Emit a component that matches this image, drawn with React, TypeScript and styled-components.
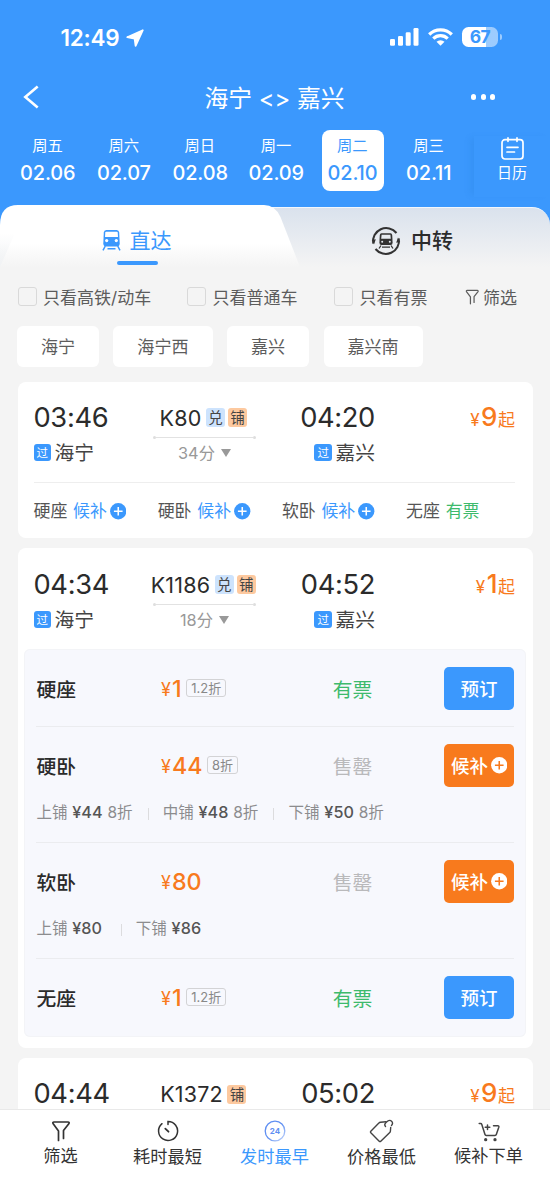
import React from 'react';
import styled, { createGlobalStyle, css } from 'styled-components';

const BLUE = '#3b98fd';
const ORANGE = '#f87a1d';
const GREEN = '#3dba6c';

const GlobalStyle = createGlobalStyle`
  * { box-sizing: border-box; }
  body {
    margin: 0;
    background: #f4f4f4;
    font-family: Inter, "Noto Sans CJK SC", sans-serif;
    color: #2b2b2b;
  }
`;

const Screen = styled.div`
  width: 550px;
  height: 1192px;
  display: flex;
  flex-direction: column;
  overflow: hidden;
  background: #f4f4f4;
`;

const Header = styled.header`
  flex: none;
  height: 267px;
  background: ${BLUE};
  color: #fff;
  display: flex;
  flex-direction: column;
`;

const StatusBar = styled.div`
  height: 64px;
  padding: 10px 48px 0 60.5px;
  display: flex;
  align-items: center;
  justify-content: space-between;
`;

const Clock = styled.div`
  display: flex;
  align-items: center;
  gap: 7px;
  font-size: 22.5px;
  font-weight: 600;
  line-height: 28px;
  letter-spacing: -0.25px;
  padding-top: 1px;
`;

const StatusIcons = styled.div`
  display: flex;
  align-items: center;
  gap: 9px;
`;

const Battery = styled.div`
  display: flex;
  align-items: center;
  gap: 2px;
  &::after {
    content: '';
    width: 2px;
    height: 6px;
    border-radius: 0 2px 2px 0;
    background: rgba(255, 255, 255, 0.5);
  }
`;

const BatteryLevel = styled.div`
  width: 36px;
  height: 20px;
  border-radius: 6.5px;
  background: linear-gradient(90deg, #fff 68%, rgba(255, 255, 255, 0.5) 68%);
  color: ${BLUE};
  font-size: 17.5px;
  font-weight: 700;
  line-height: 20px;
  letter-spacing: -0.6px;
  text-align: center;
`;

const NavBar = styled.nav`
  height: 66px;
  padding: 0 51px 0 22px;
  display: grid;
  grid-template-columns: 60px 1fr 28px;
  align-items: center;
`;

const NavTitle = styled.h1`
  margin: 0;
  padding: 3px 4px 0 0;
  font-size: 23.8px;
  font-weight: 400;
  line-height: 30px;
  text-align: center;
  white-space: pre;
`;

const Dots = styled.div`
  display: flex;
  gap: 4.4px;
  & > i {
    width: 5.2px;
    height: 5.2px;
    border-radius: 50%;
    background: #fff;
  }
`;

const DateStrip = styled.div`
  height: 75px;
  display: flex;
  padding-left: 10px;
`;

const DateCell = styled.div<{ $active?: boolean }>`
  flex: none;
  width: 62px;
  height: 61px;
  margin-right: 14.2px;
  border-radius: 8px;
  display: flex;
  flex-direction: column;
  align-items: center;
  ${(p) => p.$active && css`background: #fff; color: ${BLUE};`}
  &:first-child { margin-left: 7px; }
`;

const Weekday = styled.span`
  margin: 5px 1px 0 0;
  font-size: 15.3px;
  line-height: 22px;
`;

const DayNumber = styled.span`
  margin: 4px 0.5px 0 0;
  font-size: 19.9px;
  font-weight: 450;
  line-height: 24px;
  letter-spacing: -0.1px;
`;

const CalendarButton = styled.div`
  flex: 1;
  height: 61px;
  margin-top: 6px;
  padding-top: 1px;
  display: flex;
  flex-direction: column;
  align-items: center;
  box-shadow: -6px 0 6px -2px rgba(30, 110, 200, 0.14);
  font-size: 15px;
  line-height: 22px;
  svg { margin-bottom: 1.5px; }
`;

const TabStrip = styled.div`
  height: 62px;
  display: flex;
  align-items: flex-start;
`;

const TrainIconBox = styled.span`
  display: flex;
  height: 30px;
  align-items: center;
`;

const Tab = styled.div<{ $active?: boolean }>`
  display: flex;
  justify-content: center;
  font-size: 21px;
  line-height: 30px;
  ${(p) =>
    p.$active
      ? css`
          position: relative;
          z-index: 1;
          width: 300px;
          height: 62px;
          padding: 21px 27px 0 0;
          gap: 9px;
          color: ${BLUE};
          background: linear-gradient(#fff 62%, #f4f4f4);
          clip-path: path('M0 62 V20 Q0 0 18 0 H264 Q275 0 280.5 12 L300 62 Z');
          &::before {
            content: '';
            position: absolute;
            left: 0;
            bottom: 0;
            width: 15px;
            height: 34px;
            clip-path: polygon(0 0, 100% 0, 0 100%);
            background: linear-gradient(rgba(238, 241, 245, 0), #f1f3f5);
          }
          &::after {
            content: '';
            position: absolute;
            left: 117px;
            top: 55.5px;
            width: 41px;
            height: 4px;
            border-radius: 2px;
            background: ${BLUE};
          }
          ${TrainIconBox} { margin-top: -1px; }
        `
      : css`
          flex: 1;
          height: 60px;
          margin: 2px 0 0 -50px;
          padding: 18px 0 0 24px;
          gap: 10px;
          color: #2b2b2b;
          font-weight: 500;
          border-top: 1.5px solid #f2f7fd;
          border-radius: 0 18px 0 0;
          background: linear-gradient(#dae2ed, #f4f4f4);
        `}
`;

const FilterBar = styled.div`
  flex: none;
  height: 58.5px;
  padding: 1px 0 0 17.5px;
  display: grid;
  grid-template-columns: 169.5px 147px 131px auto;
  align-items: center;
  color: #5c5c5c;
  font-size: 17px;
  line-height: 24px;
`;

const FilterOption = styled.label`
  display: flex;
  align-items: center;
  white-space: nowrap;
  span { padding-top: 2px; }
`;

const CheckBox = styled.i`
  width: 19px;
  height: 19px;
  margin-right: 6.5px;
  border: 1.5px solid #d9d9d9;
  border-radius: 3px;
`;

const FilterLink = styled(FilterOption)`
  gap: 3.5px;
`;

const ChipRow = styled.div`
  flex: none;
  display: flex;
  gap: 14.5px;
  padding-left: 17px;
`;

const Chip = styled.div`
  height: 41.5px;
  padding: 0 23.9px;
  border-radius: 6px;
  background: #fff;
  color: #5c5c5c;
  font-size: 17.1px;
  line-height: 42px;
`;

const TrainList = styled.main`
  flex: 1;
  min-height: 0;
  overflow: hidden;
  display: flex;
  flex-direction: column;
  gap: 10.2px;
  padding: 14.5px 17.5px 0;
`;

const Card = styled.section`
  flex: none;
  border-radius: 8px;
  background: #fff;
`;

const ExpandedCard = styled(Card)`
  padding-bottom: 10.3px;
`;

const TrainHeader = styled.div`
  height: 100.5px;
  padding: 19.4px 17.5px 0 16px;
  display: grid;
  grid-template-columns: 104.5px 133px 104px 1fr;
  align-items: start;
`;

const Stop = styled.div<{ $end?: boolean }>`
  display: flex;
  flex-direction: column;
  align-items: ${(p) => (p.$end ? 'flex-end' : 'flex-start')};
`;

const StopTime = styled.div`
  font-size: 27.3px;
  line-height: 34px;
  letter-spacing: -0.35px;
  white-space: nowrap;
`;

const StationName = styled.div`
  display: flex;
  align-items: center;
  gap: 3.5px;
  color: #444;
  font-size: 19.8px;
  line-height: 34px;
  margin-top: 1px;
`;

const PassTag = styled.span`
  width: 17.5px;
  height: 17.5px;
  margin-top: -1px;
  border-radius: 3px;
  background: ${BLUE};
  color: #fff;
  font-size: 11.5px;
  line-height: 18.5px;
  text-align: center;
`;

const TrainInfo = styled.div`
  display: flex;
  flex-direction: column;
  align-items: center;
`;

const TrainCode = styled.div`
  height: 34px;
  margin-left: -2.5px;
  display: flex;
  align-items: center;
  gap: 3px;
  font-size: 21.5px;
  b { font-weight: 400; margin-right: 1.5px; font-kerning: none; letter-spacing: 0.2px; }
`;

const TrainTag = styled.span<{ $warm?: boolean }>`
  width: 19px;
  height: 19px;
  border-radius: 3px;
  background: ${(p) => (p.$warm ? '#fdc99f' : '#cde3fd')};
  color: #444;
  font-size: 14.5px;
  line-height: 20px;
  text-align: center;
`;

const RouteLine = styled.div`
  width: 103px;
  height: 3px;
  margin-top: 1px;
  display: flex;
  align-items: center;
  &::before, &::after {
    content: '';
    width: 3px;
    height: 3px;
    border-radius: 50%;
    background: #dedede;
  }
  i { flex: 1; height: 1px; background: #e2e2e2; }
`;

const Duration = styled.div`
  display: flex;
  align-items: center;
  gap: 6px;
  margin-top: 2.5px;
  color: #999;
  font-size: 16.3px;
  line-height: 24px;
  &::after {
    content: '';
    border: 5.5px solid transparent;
    border-top: 8px solid #999;
    border-bottom: 0;
  }
`;

const FromPrice = styled.div`
  padding-top: 0.8px;
  color: ${ORANGE};
  font-size: 17px;
  line-height: 34px;
  text-align: right;
  white-space: nowrap;
  b { margin: 0 0.5px 0 1.5px; font-size: 26px; font-weight: 500; line-height: 30px; }
`;

const SeatSummary = styled.div`
  height: 56.2px;
  margin: 0 17.5px 0 16px;
  border-top: 1px solid #eee;
  display: grid;
  grid-template-columns: repeat(4, 124.2px);
  align-items: center;
  color: #555;
  font-size: 16.9px;
  line-height: 24px;
`;

const SeatItem = styled.div`
  display: flex;
  align-items: center;
  padding-top: 1.5px;
  white-space: nowrap;
`;

const SeatState = styled.span<{ $color: string }>`
  margin: 0 3px 0 5.8px;
  color: ${(p) => p.$color};
`;

const SeatPanel = styled.div`
  margin: 0 6.5px;
  padding: 0 12px;
  border-radius: 6px;
  background: #f7f8fd;
  box-shadow: inset 0 0 0 1px #f3f4f7;
`;

const SeatRow = styled.div`
  padding: 18px 0 15.8px;
  & + & { padding-top: 17px; border-top: 1px solid #ebecef; }
  &:last-child { padding-bottom: 18px; }
`;

const SeatMain = styled.div`
  height: 43.3px;
  display: grid;
  grid-template-columns: 125px 171.7px 1fr 70px;
  align-items: center;
  font-size: 19.8px;
  line-height: 30px;
`;

const SeatName = styled.span`
  padding: 3px 0 0 0.5px;
  font-weight: 500;
`;

const SeatPrice = styled.div`
  display: flex;
  align-items: center;
  color: ${ORANGE};
  font-size: 18px;
  b { margin-left: 1.2px; font-size: 23.3px; font-weight: 500; letter-spacing: -0.2px; }
  i { font-style: normal; padding-top: 2px; }
`;

const Discount = styled.span`
  height: 18.5px;
  margin: -1px 0 0 4.3px;
  padding: 0 4.3px;
  border: 1px solid #d3d3d5;
  border-radius: 3px;
  color: #888;
  font-size: 13px;
  line-height: 17px;
`;

const Availability = styled.span<{ $open?: boolean }>`
  padding-top: 3px;
  color: ${(p) => (p.$open ? GREEN : '#b9b9bb')};
`;

const ActionButton = styled.div<{ $waitlist?: boolean }>`
  height: 43.3px;
  border-radius: 5px;
  background: ${(p) => (p.$waitlist ? ORANGE : BLUE)};
  color: #fff;
  display: flex;
  align-items: center;
  justify-content: center;
  gap: 2.5px;
  font-size: 18.5px;
  line-height: 40px;
  font-weight: 500;
  span { padding-top: 1px; }
`;

const BerthRow = styled.div`
  display: flex;
  align-items: center;
  height: 24px;
  margin: 13px 0 1.9px;
  padding-left: 0.5px;
`;

const Berth = styled.div`
  display: flex;
  align-items: center;
  gap: 4.7px;
  color: #8c8c8e;
  font-size: 15.5px;
  line-height: 24px;
  span { padding-top: 1px; }
  b { color: #555; font-weight: 500; font-size: 16.2px; letter-spacing: 0.1px; }
  b:last-child { margin-right: 3.5px; }
  & + &::before {
    content: '';
    width: 1px;
    height: 12px;
    margin: 3px 9.5px 0 15px;
    background: #dcdcde;
  }
`;

const TabBar = styled.footer`
  flex: none;
  height: 83px;
  padding: 0 8px 0 7px;
  border-top: 1.5px solid #e9e9e9;
  background: #fff;
  display: grid;
  grid-template-columns: repeat(5, 107px);
`;

const TabBarItem = styled.div<{ $active?: boolean; $tight?: boolean }>`
  display: flex;
  flex-direction: column;
  align-items: center;
  padding-top: 9px;
  gap: ${(p) => (p.$tight ? '0.5px' : '1.5px')};
  color: ${(p) => (p.$active ? BLUE : '#333')};
  font-size: 17.2px;
  line-height: 24px;
`;

const TabBarIcon = styled.span`
  height: 24px;
  display: flex;
  align-items: center;
`;

const PlusIcon = ({ fill, mark, size = 16.5 }: { fill: string; mark: string; size?: number }) => (
  <svg width={size} height={size} viewBox="0 0 16 16">
    <circle cx="8" cy="8" r="7.9" fill={fill} />
    <path d="M8 3.8V12.2M3.8 8H12.2" stroke={mark} strokeWidth="1.5" />
  </svg>
);

const FunnelIcon = ({ size }: { size: number }) => (
  <svg width={size} height={size * 1.1} viewBox="0 0 20 22" fill="none" stroke="currentColor" strokeWidth="1.7" strokeLinejoin="round" strokeLinecap="round">
    <path d="M7.5 20.5V11L2 3.5Q1.4 2 3 2H17Q18.6 2 18 3.5L12.5 10.5V18.5" />
  </svg>
);

const TrainIcon = () => (
  <svg width="19" height="22" viewBox="0 0 19 22">
    <path fill="currentColor" d="M4.3 1H14.7Q17 1 17.2 3.5L17.7 14.5Q17.7 17.5 14.7 17.5H4.3Q1.3 17.5 1.3 14.5L1.8 3.5Q2 1 4.3 1Z" />
    <path fill="#fff" d="M4.2 2.7H14.8Q15.6 2.7 15.7 3.6L16 7.9H3L3.3 3.6Q3.4 2.7 4.2 2.7Z" />
    <circle cx="4.7" cy="11.6" r="1.6" fill="#fff" />
    <circle cx="14.3" cy="11.6" r="1.6" fill="#fff" />
    <path d="M3.3 17L1 21.3M15.7 17L18 21.3M5.5 19.8H13.5" stroke="currentColor" strokeWidth="1.5" fill="none" />
  </svg>
);

const TransferIcon = () => (
  <svg width="30" height="30" viewBox="0 0 30 30" fill="none" stroke="#333" strokeWidth="2">
    <path d="M2.2 17.5A13.2 13.2 0 0 1 25.5 7" />
    <path d="M27.8 12.5A13.2 13.2 0 0 1 4.5 23" />
    <path d="M0.8 14L4.8 13.2L3 18.5ZM29.2 16L25.2 16.8L27 11.5Z" fill="#333" stroke="none" />
    <path stroke="none" fill="#333" d="M10.5 7.2H19.5Q21 7.2 21.2 9L21.6 16.5Q21.6 19 19.6 19H10.4Q8.4 19 8.4 16.5L8.8 9Q9 7.2 10.5 7.2Z" />
    <path stroke="none" fill="#e6ebf1" d="M10.6 8.8H19.4L19.8 12.8H10.2Z" />
    <circle cx="11.2" cy="15.7" r="1" fill="#e6ebf1" stroke="none" />
    <circle cx="18.8" cy="15.7" r="1" fill="#e6ebf1" stroke="none" />
    <path d="M10 19.5L8 22.5M20 19.5L22 22.5M11 21.2H19" strokeWidth="1.3" />
  </svg>
);

const CalendarIcon = () => (
  <svg width="23" height="23" viewBox="0 0 23 23" fill="none" stroke="#fff" strokeWidth="1.7" strokeLinecap="round">
    <rect x="1" y="2.7" width="21" height="19.3" rx="3" />
    <path d="M7 0.9V4.3M16 0.9V4.3M6 10.3H17M6 15H13.5" />
  </svg>
);

const SignalIcon = () => (
  <svg width="29" height="18" viewBox="0 0 29 18" fill="#fff">
    <rect x="0" y="11" width="5" height="6.7" rx="1.3" />
    <rect x="8" y="8" width="5" height="9.7" rx="1.3" />
    <rect x="15.7" y="4.3" width="5" height="13.4" rx="1.3" />
    <rect x="23.5" y="0" width="5" height="17.7" rx="1.3" />
  </svg>
);

const WifiIcon = () => (
  <svg width="25" height="18" viewBox="0 0 25 18" fill="none" stroke="#fff" strokeWidth="3.2">
    <path d="M1.2 6.5A16 16 0 0 1 23.8 6.5" />
    <path d="M5.3 10.7A10.2 10.2 0 0 1 19.7 10.7" />
    <path d="M12.5 17.8L8.5 13.8A5.8 5.8 0 0 1 16.5 13.8Z" fill="#fff" stroke="none" />
  </svg>
);

const LocationIcon = () => (
  <svg width="18" height="18" viewBox="0 0 18 18">
    <path d="M16.8 1.2L1.2 8.2L8.6 9.6L9.6 16.8Z" fill="#fff" stroke="#fff" strokeWidth="1.8" strokeLinejoin="round" />
  </svg>
);

const BackIcon = () => (
  <svg width="18" height="24" viewBox="0 0 18 24" fill="none" stroke="#fff" strokeWidth="2.6">
    <path d="M15.7 1.5L3.3 12L15.7 22.5" />
  </svg>
);

const TimerIcon = () => (
  <svg width="22" height="22" viewBox="0 0 22 22" fill="none" stroke="#333" strokeWidth="1.5" strokeLinecap="round">
    <path d="M11 4.5V1.5A9.5 9.5 0 1 1 5 3.7" />
    <path d="M8.3 8.6L11.5 11.7" strokeWidth="1.8" />
  </svg>
);

const DayClockIcon = () => (
  <svg width="22" height="22" viewBox="0 0 22 22">
    <defs>
      <linearGradient id="ring" x1="0" y1="0" x2="1" y2="1">
        <stop offset="0.5" stopColor="#5f8ff2" />
        <stop offset="1" stopColor="#c6d7fb" />
      </linearGradient>
    </defs>
    <circle cx="11" cy="11" r="9.8" fill="none" stroke="url(#ring)" strokeWidth="1.3" />
    <text x="11" y="13.9" textAnchor="middle" fontFamily="Inter, sans-serif" fontSize="8" fontWeight="700" fill="#5f8ff2">24</text>
  </svg>
);

const PriceTagIcon = () => (
  <svg width="25" height="24" viewBox="0 0 25 24" fill="none" stroke="#444" strokeWidth="1.4" strokeLinejoin="round" strokeLinecap="round">
    <path d="M17 2.7L11.5 3.2Q10.5 3.3 9.9 4L1.8 12.2Q1 13 1.8 13.8L10.2 22.2Q11 23 11.8 22.2L20.5 13.8Q21.3 13.1 21.4 12.1L21.7 8.5" />
    <path d="M16.5 7.5Q14.8 5.6 17 3.5L18.8 2Q21 0.6 22.8 2.4Q24.4 4.5 22.5 6.5" />
  </svg>
);

const CartIcon = () => (
  <svg width="22" height="22" viewBox="0 0 22 22" fill="none" stroke="#444" strokeWidth="1.5" strokeLinecap="round" strokeLinejoin="round">
    <path d="M1.2 3.5H2.6Q3.5 3.5 3.8 4.4L7 14.5Q7.3 15.4 8.2 15.4H17Q18 15.4 18.3 14.5L20.8 7.2Q21.2 5.8 19.8 5.8H15.5" />
    <path d="M9.5 5V9.5M7.2 7.2H11.8" />
    <circle cx="7.7" cy="19.7" r="0.9" fill="#444" />
    <circle cx="17" cy="19.7" r="0.9" fill="#444" />
  </svg>
);

const DATES = [
  ['周五', '02.06'],
  ['周六', '02.07'],
  ['周日', '02.08'],
  ['周一', '02.09'],
  ['周二', '02.10'],
  ['周三', '02.11'],
];

interface TrainProps {
  depart: string;
  arrive: string;
  code: string;
  minutes?: string;
  from?: string;
  to?: string;
  price: string;
  exchange?: boolean;
}

const TrainHead = ({ depart, arrive, code, minutes, from, to, price, exchange }: TrainProps) => (
  <TrainHeader>
    <Stop>
      <StopTime>{depart}</StopTime>
      {from && <StationName><PassTag>过</PassTag>{from}</StationName>}
    </Stop>
    <TrainInfo>
      <TrainCode>
        <b>{code}</b>
        {exchange && <TrainTag>兑</TrainTag>}
        <TrainTag $warm>铺</TrainTag>
      </TrainCode>
      {minutes && (
        <>
          <RouteLine><i /></RouteLine>
          <Duration>{minutes}分</Duration>
        </>
      )}
    </TrainInfo>
    <Stop $end>
      <StopTime>{arrive}</StopTime>
      {to && <StationName><PassTag>过</PassTag>{to}</StationName>}
    </Stop>
    <FromPrice>¥<b>{price}</b>起</FromPrice>
  </TrainHeader>
);

interface SeatProps {
  name: string;
  price: string;
  discount?: string;
  open?: boolean;
  berths?: { name: string; price: string; discount?: string }[];
}

const SEATS: SeatProps[] = [
  { name: '硬座', price: '1', discount: '1.2折', open: true },
  {
    name: '硬卧',
    price: '44',
    discount: '8折',
    berths: [
      { name: '上铺', price: '44', discount: '8折' },
      { name: '中铺', price: '48', discount: '8折' },
      { name: '下铺', price: '50', discount: '8折' },
    ],
  },
  {
    name: '软卧',
    price: '80',
    berths: [
      { name: '上铺', price: '80' },
      { name: '下铺', price: '86' },
    ],
  },
  { name: '无座', price: '1', discount: '1.2折', open: true },
];

const Seat = ({ name, price, discount, open, berths }: SeatProps) => (
  <SeatRow>
    <SeatMain>
      <SeatName>{name}</SeatName>
      <SeatPrice>
        <i>¥</i><b>{price}</b>
        {discount && <Discount>{discount}</Discount>}
      </SeatPrice>
      <Availability $open={open}>{open ? '有票' : '售罄'}</Availability>
      {open ? (
        <ActionButton><span>预订</span></ActionButton>
      ) : (
        <ActionButton $waitlist><span>候补</span><PlusIcon fill="#fff" mark={ORANGE} /></ActionButton>
      )}
    </SeatMain>
    {berths && (
      <BerthRow>
        {berths.map((b) => (
          <Berth key={b.name}>
            <span>{b.name}</span>
            <b>¥{b.price}</b>
            {b.discount && <span>{b.discount}</span>}
          </Berth>
        ))}
      </BerthRow>
    )}
  </SeatRow>
);

export default function App() {
  return (
    <Screen>
      <GlobalStyle />
      <Header>
        <StatusBar>
          <Clock>12:49<LocationIcon /></Clock>
          <StatusIcons>
            <SignalIcon />
            <WifiIcon />
            <Battery><BatteryLevel>67</BatteryLevel></Battery>
          </StatusIcons>
        </StatusBar>
        <NavBar>
          <BackIcon />
          <NavTitle>{'海宁 <> 嘉兴'}</NavTitle>
          <Dots><i /><i /><i /></Dots>
        </NavBar>
        <DateStrip>
          {DATES.map(([week, day]) => (
            <DateCell key={day} $active={day === '02.10'}>
              <Weekday>{week}</Weekday>
              <DayNumber>{day}</DayNumber>
            </DateCell>
          ))}
          <CalendarButton><CalendarIcon />日历</CalendarButton>
        </DateStrip>
        <TabStrip>
          <Tab $active><TrainIconBox><TrainIcon /></TrainIconBox>直达</Tab>
          <Tab><TransferIcon />中转</Tab>
        </TabStrip>
      </Header>
      <FilterBar>
        <FilterOption><CheckBox /><span>只看高铁/动车</span></FilterOption>
        <FilterOption><CheckBox /><span>只看普通车</span></FilterOption>
        <FilterOption><CheckBox /><span>只看有票</span></FilterOption>
        <FilterLink><FunnelIcon size={14.5} /><span>筛选</span></FilterLink>
      </FilterBar>
      <ChipRow>
        {['海宁', '海宁西', '嘉兴', '嘉兴南'].map((s) => <Chip key={s}>{s}</Chip>)}
      </ChipRow>
      <TrainList>
        <Card>
          <TrainHead depart="03:46" arrive="04:20" code="K80" minutes="34" from="海宁" to="嘉兴" price="9" exchange />
          <SeatSummary>
            {['硬座', '硬卧', '软卧'].map((s) => (
              <SeatItem key={s}>
                {s}<SeatState $color={BLUE}>候补</SeatState><PlusIcon fill={BLUE} mark="#fff" />
              </SeatItem>
            ))}
            <SeatItem>无座<SeatState $color={GREEN}>有票</SeatState></SeatItem>
          </SeatSummary>
        </Card>
        <ExpandedCard>
          <TrainHead depart="04:34" arrive="04:52" code="K1186" minutes="18" from="海宁" to="嘉兴" price="1" exchange />
          <SeatPanel>
            {SEATS.map((s) => <Seat key={s.name} {...s} />)}
          </SeatPanel>
        </ExpandedCard>
        <Card>
          <TrainHead depart="04:44" arrive="05:02" code="K1372" price="9" />
        </Card>
      </TrainList>
      <TabBar>
        <TabBarItem $tight><TabBarIcon><FunnelIcon size={20} /></TabBarIcon>筛选</TabBarItem>
        <TabBarItem><TabBarIcon><TimerIcon /></TabBarIcon>耗时最短</TabBarItem>
        <TabBarItem $active><TabBarIcon><DayClockIcon /></TabBarIcon>发时最早</TabBarItem>
        <TabBarItem><TabBarIcon><PriceTagIcon /></TabBarIcon>价格最低</TabBarItem>
        <TabBarItem $tight><TabBarIcon><CartIcon /></TabBarIcon>候补下单</TabBarItem>
      </TabBar>
    </Screen>
  );
}
